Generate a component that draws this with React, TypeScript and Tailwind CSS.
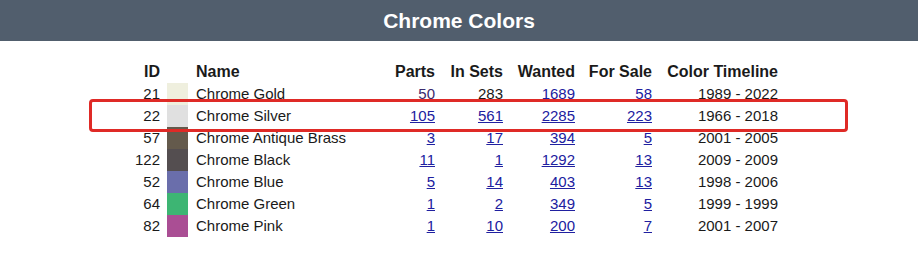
const ROWS = [
  { id: 21, color: "#efefde", name: "Chrome Gold", parts: "50", sets: "283", wanted: "1689", sale: "58", years: "1989 - 2022" },
  { id: 22, color: "#e0e0e0", name: "Chrome Silver", parts: "105", sets: "561", wanted: "2285", sale: "223", years: "1966 - 2018" },
  { id: 57, color: "#645a4c", name: "Chrome Antique Brass", parts: "3", sets: "17", wanted: "394", sale: "5", years: "2001 - 2005" },
  { id: 122, color: "#544e50", name: "Chrome Black", parts: "11", sets: "1", wanted: "1292", sale: "13", years: "2009 - 2009" },
  { id: 52, color: "#6a6eab", name: "Chrome Blue", parts: "5", sets: "14", wanted: "403", sale: "13", years: "1998 - 2006" },
  { id: 64, color: "#3db573", name: "Chrome Green", parts: "1", sets: "2", wanted: "349", sale: "5", years: "1999 - 1999" },
  { id: 82, color: "#aa4e94", name: "Chrome Pink", parts: "1", sets: "10", wanted: "200", sale: "7", years: "2001 - 2007" },
];

const COLS = "grid-cols-[30px_28px_200px_47px_68px_72px_77px_126px]";

function Num({ v, tone = "text-[#2020a0]" }: { v: string; tone?: string }) {
  return (
    <div className="text-right">
      <a href="#" className={`${tone} underline`}>
        {v}
      </a>
    </div>
  );
}

export default function App() {
  return (
    <div className="relative w-[918px] h-[255px] bg-white font-['Liberation_Sans',Arial,sans-serif] text-[#1a1a1a]">
      <div className="h-[41px] bg-[#515e6d] flex items-center justify-center">
        <h1 className="text-white font-bold text-[21px] leading-none">Chrome Colors</h1>
      </div>

      <div className="pl-[130px] pt-[20px]">
        <div className={`grid ${COLS} text-[16px] font-bold leading-[22px]`}>
          <div className="text-right">ID</div>
          <div />
          <div className="pl-[8px]">Name</div>
          <div className="text-right">Parts</div>
          <div className="text-right">In Sets</div>
          <div className="text-right">Wanted</div>
          <div className="text-right">For Sale</div>
          <div className="text-right">Color Timeline</div>
        </div>
        {ROWS.map((r, i) => (
          <div key={r.id} className={`grid ${COLS} text-[15px] leading-[22px]`}>
            <div className="text-right">{r.id}</div>
            <div className="pl-[7px]">
              <div className="w-[21px] h-full" style={{ backgroundColor: r.color }} />
            </div>
            <div className="pl-[8px]">{r.name}</div>
            <Num v={r.parts} tone={i === 0 ? "text-[#3b2a6e]" : "text-[#2020a0]"} />
            <Num v={r.sets} tone={i === 0 ? "text-[#1a1a1a]" : "text-[#2020a0]"} />
            <Num v={r.wanted} />
            <Num v={r.sale} />
            <div className="text-right">{r.years}</div>
          </div>
        ))}
      </div>

      <div className="absolute left-[89px] top-[99px] w-[759px] h-[33px] border-[3px] border-[#df2a26] rounded-[4px]" />
    </div>
  );
}
